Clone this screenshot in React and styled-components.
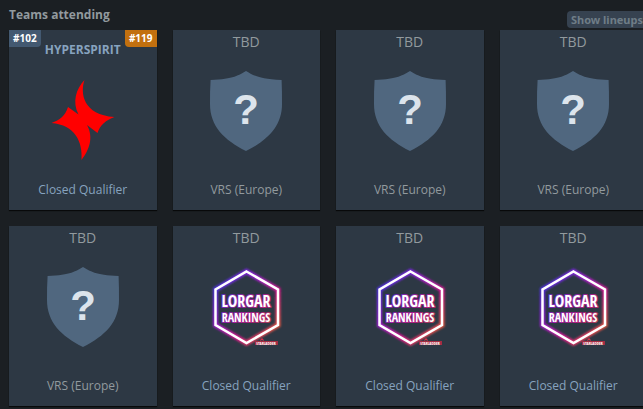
import styled, { createGlobalStyle } from "styled-components"


const teams = [
    { id: 1, name: "HYPERSPIRIT", logo: "spirit", event: "Closed Qualifier", valve: "#102", hltv: "#119" },
    { id: 2, name: "TBD", logo: "shield", event: "VRS (Europe)" },
    { id: 3, name: "TBD", logo: "shield", event: "VRS (Europe)" },
    { id: 4, name: "TBD", logo: "shield", event: "VRS (Europe)" },
    { id: 5, name: "TBD", logo: "shield", event: "VRS (Europe)" },
    { id: 6, name: "TBD", logo: "lorgar", event: "Closed Qualifier" },
    { id: 7, name: "TBD", logo: "lorgar", event: "Closed Qualifier" },
    { id: 8, name: "TBD", logo: "lorgar", event: "Closed Qualifier" },
]


function ShieldLogo(){
    return(
    <Logo viewBox="0 0 80 80">
        <path fill="#50677f" d="M40 0 C47 4 52 8 75.600 9 C76 17 76 25 76 33 C76 55 62 69 40 80 C18 69 4 55 4 33 C4 25 4 17 4.600 9 C28 8 33 4 40 0Z"/>
        <Question x="40" y="53">?</Question>
    </Logo>)
}

function SpiritLogo(){
    return(
    <Logo viewBox="0 0 80 80">
        <path fill="#ff0000" d="M41.500 0 C37 13 40 35 71.500 37 C63 40 57 45 54.500 53 L44 45 C51 58 46 70 38.500 80 C40 62 32 45 8.500 43 C17 40 22 36 25 27 L35.500 34.500 C29 22 33 9 41.500 0Z"/>
    </Logo>)
}

function LorgarLogo({id}){
    const neon = `neon-${id}`
    const glow = `glow-${id}`

    return(
    <Logo viewBox="0 0 80 80">
        <defs>
            <linearGradient id={neon} gradientUnits="userSpaceOnUse" x1="8" y1="14" x2="72" y2="70">
                <stop offset="0" stopColor="#3a35e8"/>
                <stop offset="0.3" stopColor="#9a1fe0"/>
                <stop offset="0.65" stopColor="#e0188f"/>
                <stop offset="1" stopColor="#ee6a2a"/>
            </linearGradient>
            <filter id={glow} x="-20%" y="-20%" width="140%" height="140%">
                <feGaussianBlur stdDeviation="1"/>
            </filter>
        </defs>
        <path filter={`url(#${glow})`} fill="none" stroke={`url(#${neon})`} strokeWidth="5" d="M40.500 4.500 L72 22.500 V58 L40.500 76 L9.500 58 V22.500Z"/>
        <path fill="none" stroke="#fff" strokeWidth="2.500" d="M40.500 4.500 L72 22.500 V58 L40.500 76 L9.500 58 V22.500Z"/>
        <Lorgar x="40" y="40" stroke={`url(#${neon})`}>LORGAR</Lorgar>
        <Rankings x="40" y="55" stroke={`url(#${neon})`}>RANKINGS</Rankings>
        <path fill="#d8314a" d="M56 71 L57.500 72.500 L58 74 L56 73 L54 74 L54.500 72.500Z"/>
        <rect fill="#a52c43" x="49" y="74" width="23" height="4"/>
        <Sponsor x="60" y="78">STARLADDER</Sponsor>
    </Logo>)
}

function TeamLogo({team}){
    if(team.logo === "spirit") return <SpiritLogo />
    if(team.logo === "lorgar") return <LorgarLogo id={team.id} />
    return <ShieldLogo />
}

function TeamCard({team}){
    const ranked = Boolean(team.valve)
    const qualifier = team.event === "Closed Qualifier"

    return(
    <Card $ranked={ranked}>
        {ranked && <RankLeft>{team.valve}</RankLeft>}
        {ranked && <RankRight>{team.hltv}</RankRight>}
        {ranked ? <TeamLink href="#team">{team.name}</TeamLink> : <TeamName>{team.name}</TeamName>}
        <TeamLogo team={team} />
        {qualifier ? <EventLink href="#qualifier">{team.event}</EventLink> : <EventName>{team.event}</EventName>}
    </Card>)
}


export default function App(){
    return(<>
    <GlobalStyle />
    <Page>
        <Header>
            <Title>Teams attending</Title>
            <LineupsButton type="button">Show lineups</LineupsButton>
        </Header>
        <Grid>
            {teams.map((team)=><TeamCard key={team.id} team={team} />)}
        </Grid>
    </Page>
    </>)
}


const GlobalStyle=createGlobalStyle`
body{
    margin: 0;
    background-color: #1b1f23;
    font-family: "Open Sans", "Noto Sans", sans-serif;
    overflow-x: hidden;
}
`

const Page=styled.main`
padding: 5px 0 3px 9px;
margin-right: -4px;
`

const Header=styled.header`
display: flex;
justify-content: space-between;
align-items: flex-start;
height: 25px;
`

const Title=styled.h1`
margin: 0;
font-size: 12px;
line-height: 20px;
font-weight: 700;
color: #929a9e;
`

const LineupsButton=styled.button`
align-self: flex-end;
margin-bottom: 2px;
padding: 0 4px;
border: 0;
border-radius: 4px;
background-color: #364250;
color: #6f7d87;
font-family: "Noto Sans", sans-serif;
font-size: 11px;
line-height: 17px;
font-weight: 700;
white-space: nowrap;
`

const Grid=styled.section`
display: grid;
grid-template-columns: repeat(4, 1fr);
gap: 16px;
`

const Card=styled.article`
position: relative;
display: flex;
flex-direction: column;
align-items: center;
box-sizing: border-box;
min-height: 180px;
padding: ${({$ranked})=>$ranked ? "10px" : "2px"} 0 10px;
background-color: #2d3844;
box-shadow: 0 1px 1px rgba(0, 0, 0, 0.7);
`

const TeamName=styled.span`
margin-bottom: 19px;
font-size: 14px;
line-height: 20px;
color: #929a9e;
`

const TeamLink=styled.a`
margin-bottom: 20px;
font-size: 12px;
line-height: 20px;
font-weight: 700;
color: #87a3bf;
text-decoration: none;
`

const EventName=styled.span`
margin-top: auto;
font-size: 12px;
line-height: 20px;
color: #929a9e;
`

const EventLink=styled.a`
margin-top: auto;
font-size: 12px;
line-height: 20px;
color: #87a3bf;
text-decoration: none;
`

const Rank=styled.span`
position: absolute;
top: 0;
padding: 0 4px;
font-size: 10px;
line-height: 17px;
font-weight: 700;
color: #fff;
`

const RankLeft=styled(Rank)`
left: 0;
border-bottom-right-radius: 4px;
background-color: #435971;
`

const RankRight=styled(Rank)`
right: 0;
border-bottom-left-radius: 4px;
background-color: #c2700f;
`

const Logo=styled.svg`
display: block;
flex: none;
width: 80px;
height: 80px;
overflow: visible;
`

const Question=styled.text`
font-family: "Liberation Sans", sans-serif;
font-size: 42px;
font-weight: 700;
text-anchor: middle;
fill: #dce4ec;
`

const Lorgar=styled.text`
font-family: "Liberation Sans Narrow", "Open Sans Condensed", "DejaVu Sans Condensed", sans-serif;
font-size: 16px;
font-weight: 700;
text-anchor: middle;
fill: #fff;
stroke-width: 2px;
stroke-linejoin: round;
stroke-opacity: 0.7;
paint-order: stroke;
`

const Rankings=styled(Lorgar)`
font-size: 12px;
`

const Sponsor=styled(Lorgar)`
font-size: 4px;
`
